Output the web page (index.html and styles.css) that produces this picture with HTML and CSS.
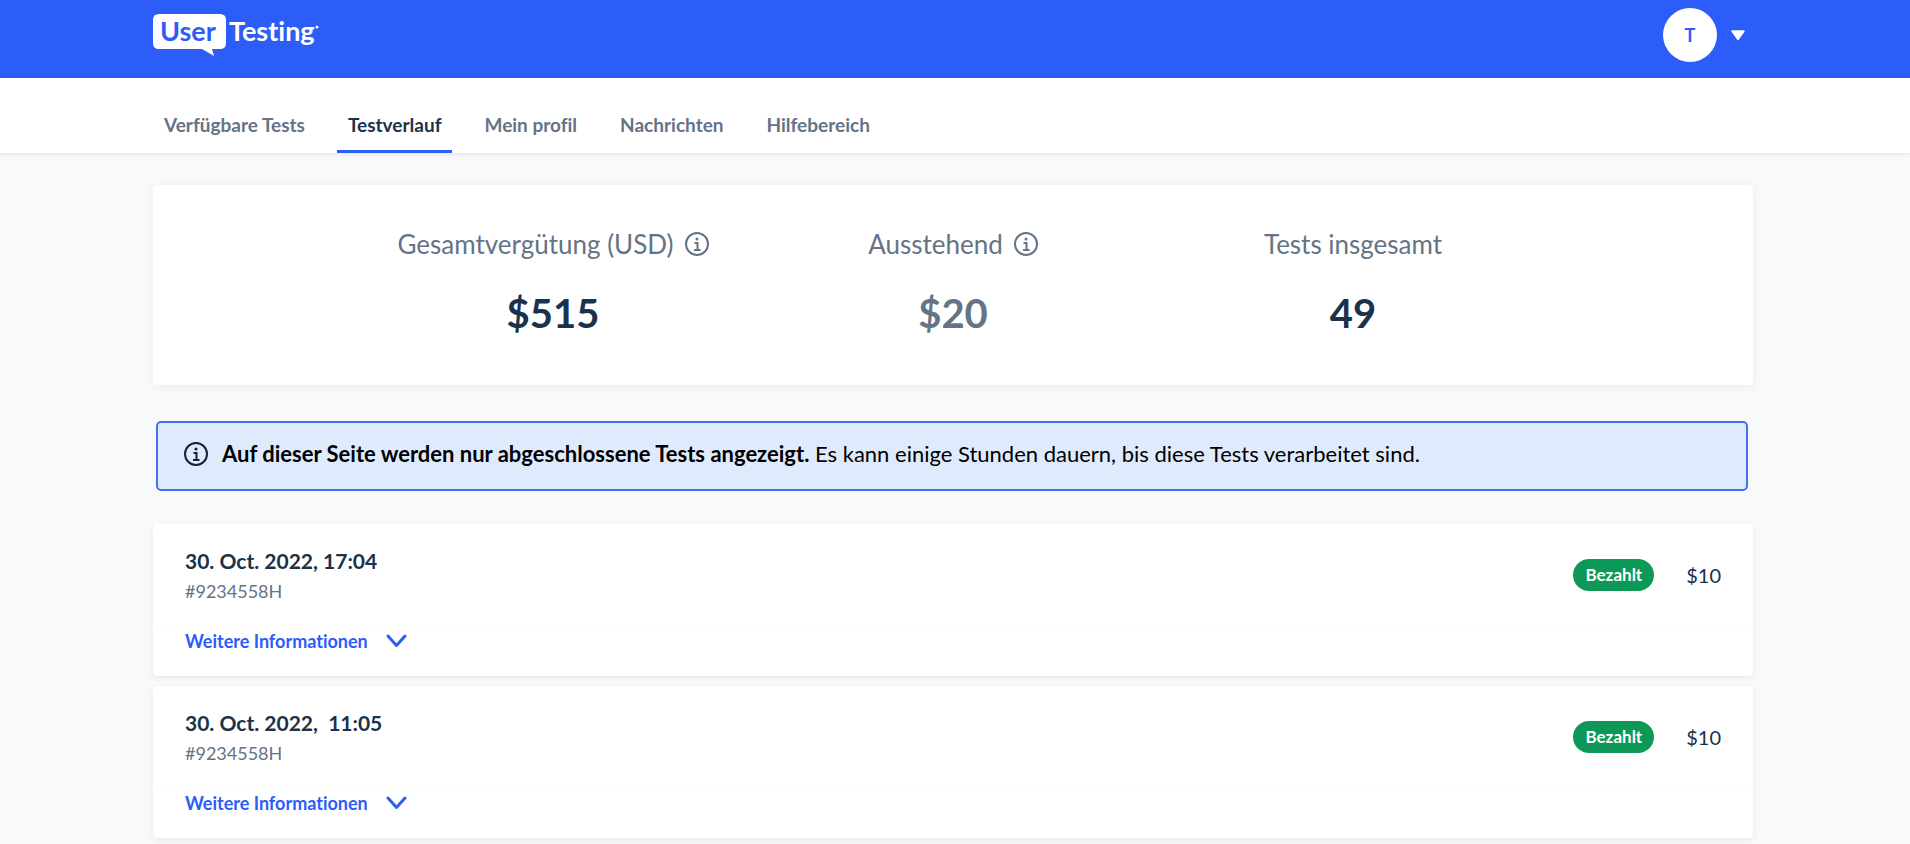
FILE: index.html
```
<!DOCTYPE html>
<html lang="de">
<head>
    <meta charset="UTF-8">
    <meta name="viewport" content="width=device-width, initial-scale=1.0">
    <title>Testverlauf</title>
    <link rel="stylesheet" href="styles.css">
</head>
<body>
    <!-- Shared icons -->
    <svg class="icon-defs" width="0" height="0" aria-hidden="true">
        <symbol id="icon-info" viewBox="0 0 24 24">
            <circle cx="12" cy="12" r="11" fill="none" stroke="currentColor" stroke-width="2" />
            <circle cx="12" cy="7" r="1.5" fill="currentColor" />
            <path d="M9.5 11H12.5V17.5M9 18H15.5" fill="none" stroke="currentColor" stroke-width="2" />
        </symbol>
        <symbol id="icon-chevron" viewBox="0 0 20 14">
            <path d="M1.5 2L10 11.5L18.5 2" fill="none" stroke="currentColor" stroke-width="3" stroke-linecap="round" stroke-linejoin="round" />
        </symbol>
    </svg>

    <header class="header">
        <a href="#" class="logo" aria-label="UserTesting">
            <svg width="170" height="46" viewBox="0 0 170 46">
                <path d="M6 1H67Q73 1 73 7V30Q73 36 67 36H59L61 43L49 36H6Q0 36 0 30V7Q0 1 6 1Z" fill="#fff" />
                <text class="logo-user" x="7" y="28">User</text>
                <text class="logo-testing" x="76" y="28">Testing</text>
                <circle cx="164" cy="14" r="1.5" fill="#fff" />
            </svg>
        </a>
        <button class="account" aria-label="Konto">
            <span class="avatar">T</span>
            <svg width="14" height="11" viewBox="0 0 14 11">
                <path d="M1 1H13L7 9.5Z" fill="#fff" stroke="#fff" stroke-width="1.5" stroke-linejoin="round" />
            </svg>
        </button>
    </header>

    <nav class="tabs">
        <a href="#" class="tab">Verfügbare Tests</a>
        <a href="#" class="tab active">Testverlauf</a>
        <a href="#" class="tab">Mein profil</a>
        <a href="#" class="tab">Nachrichten</a>
        <a href="#" class="tab">Hilfebereich</a>
    </nav>

    <main class="content">
        <section class="summary">
            <div class="stat">
                <div class="stat-label">Gesamtvergütung (USD) <svg class="icon"><use href="#icon-info" /></svg></div>
                <div class="stat-value">$515</div>
            </div>
            <div class="stat">
                <div class="stat-label">Ausstehend <svg class="icon"><use href="#icon-info" /></svg></div>
                <div class="stat-value pending">$20</div>
            </div>
            <div class="stat">
                <div class="stat-label">Tests insgesamt</div>
                <div class="stat-value">49</div>
            </div>
        </section>

        <div class="notice">
            <svg class="icon"><use href="#icon-info" /></svg>
            <p><strong>Auf dieser Seite werden nur abgeschlossene Tests angezeigt.</strong> Es kann einige Stunden dauern, bis diese Tests verarbeitet sind.</p>
        </div>

        <article class="test">
            <div class="test-main">
                <div>
                    <h2>30. Oct. 2022, 17:04</h2>
                    <p class="test-id">#9234558H</p>
                </div>
                <div class="payment">
                    <span class="badge">Bezahlt</span>
                    <span class="amount">$10</span>
                </div>
            </div>
            <div class="test-more">
                <button class="more">Weitere Informationen <svg class="chevron"><use href="#icon-chevron" /></svg></button>
            </div>
        </article>

        <article class="test">
            <div class="test-main">
                <div>
                    <h2>30. Oct. 2022, &nbsp;11:05</h2>
                    <p class="test-id">#9234558H</p>
                </div>
                <div class="payment">
                    <span class="badge">Bezahlt</span>
                    <span class="amount">$10</span>
                </div>
            </div>
            <div class="test-more">
                <button class="more">Weitere Informationen <svg class="chevron"><use href="#icon-chevron" /></svg></button>
            </div>
        </article>
    </main>
</body>
</html>
```
FILE: styles.css
```
* {
    box-sizing: border-box;
}

body {
    margin: 0;
    background-color: #f8f9fb;
    color: #1a324b;
    font-family: Lato, sans-serif;
    font-size: 18px;
    font-variant-ligatures: none;
    line-height: 24px;
}

h2,
p {
    margin: 0;
}

a {
    text-decoration: none;
}

button {
    padding: 0;
    border: none;
    background: none;
    font: inherit;
    cursor: pointer;
}

.icon-defs {
    position: absolute;
}

.icon {
    width: 24px;
    height: 24px;
    flex: none;
}

/* Header */
.header {
    display: flex;
    justify-content: space-between;
    padding: 8px 165px 16px 153px;
    background-color: #2d5df9;
}

.logo {
    padding-top: 5px;
}

.logo svg {
    display: block;
}

.logo-user,
.logo-testing {
    font-size: 27px;
    font-weight: bold;
}

.logo-user {
    fill: #2d5df9;
}

.logo-testing {
    fill: #fff;
}

.account {
    display: flex;
    align-items: center;
    gap: 14px;
}

.avatar {
    display: flex;
    align-items: center;
    justify-content: center;
    width: 54px;
    height: 54px;
    border-radius: 50%;
    background-color: #fff;
    color: #2d5df9;
    font-weight: bold;
}

/* Tabs */
.tabs {
    display: flex;
    gap: 21px;
    padding: 0 153px;
    background-color: #fff;
    box-shadow: 0 1px 4px rgba(26, 50, 75, 0.12);
}

.tab {
    padding: 35px 11px 13px;
    border-bottom: 3px solid transparent;
    color: #647386;
    font-size: 19px;
    font-weight: bold;
}

.tab.active {
    border-color: #2d5df9;
    color: #1a324b;
}

/* Content */
.content {
    padding: 32px 157px 6px 153px;
}

.summary {
    display: flex;
    padding: 39px 200px 48px;
    border-radius: 4px;
    background-color: #fff;
    box-shadow: 0 2px 12px rgba(26, 50, 75, 0.06);
}

.stat {
    flex: 1;
    text-align: center;
}

.stat-label {
    display: flex;
    align-items: center;
    justify-content: center;
    gap: 11px;
    color: #647386;
    font-size: 26px;
    line-height: 40px;
}

.stat-value {
    margin-top: 25px;
    font-size: 40px;
    font-weight: bold;
    line-height: 48px;
}

.stat-value.pending {
    color: #647386;
}

.notice {
    display: flex;
    align-items: center;
    gap: 14px;
    margin: 36px 5px 33px 3px;
    padding: 19px 26px 23px;
    border: 2px solid #4570ee;
    border-radius: 5px;
    background-color: #dfebfd;
    color: #000;
    font-size: 22px;
}

.notice .icon {
    color: #0f2334;
}

/* Test history */
.test {
    margin-bottom: 10px;
    border-radius: 4px;
    background-color: #fff;
    box-shadow: 0 2px 6px rgba(26, 50, 75, 0.08);
}

.test:last-child {
    margin-bottom: 0;
}

.test-main {
    display: flex;
    justify-content: space-between;
    align-items: center;
    padding: 21px 32px;
    border-bottom: 1px solid #f9fafb;
}

.test h2 {
    font-size: 21px;
    line-height: 32px;
}

.test-id {
    color: #647386;
    line-height: 28px;
}

.payment {
    display: flex;
    align-items: center;
    gap: 32px;
}

.badge {
    padding: 4px 12px;
    border-radius: 16px;
    background-color: #0d9857;
    color: #fff;
    font-size: 17px;
    font-weight: bold;
}

.amount {
    font-size: 20px;
}

.test-more {
    padding: 2px 32px 23px;
}

.more {
    display: flex;
    align-items: center;
    gap: 18px;
    color: #2d5df9;
    font-weight: bold;
}

.chevron {
    width: 21px;
    height: 14px;
}
```
